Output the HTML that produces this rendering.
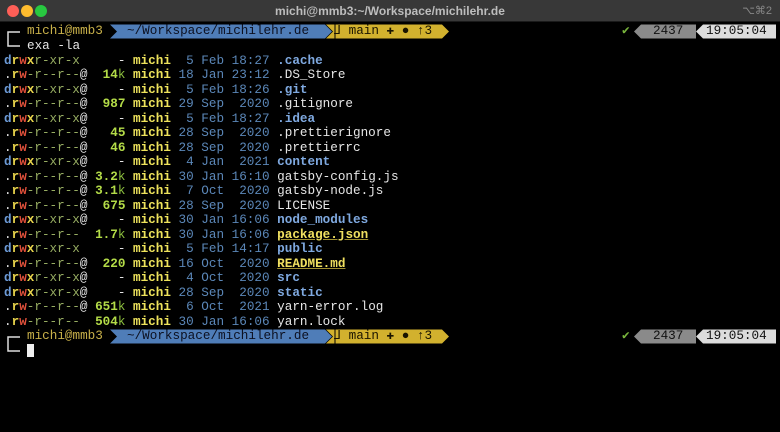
<!DOCTYPE html>
<html><head><meta charset="utf-8"><style>
*{margin:0;padding:0;box-sizing:border-box}
body{width:780px;height:432px;background:#000;overflow:hidden;position:relative;font-family:"Liberation Mono",monospace}
.tb{position:absolute;left:0;top:0;width:780px;height:22px;background:#383838;border-bottom:1px solid #1a1a1a}
.dot{position:absolute;top:5px;width:12px;height:12px;border-radius:50%}
.tt{position:absolute;left:0;width:780px;top:4px;text-align:center;font:bold 12px "Liberation Sans",sans-serif;color:#bdbdbd}
.kb{position:absolute;right:8px;top:4px;font:11px "Liberation Sans",sans-serif;color:#888}
.l{position:absolute;left:4px;font-size:12.65px;line-height:14.5px;white-space:pre;color:#e6e6e6}
.D{color:#6c9ad6;font-weight:bold}.R{color:#e8d44c;font-weight:bold}.W{color:#e0503a;font-weight:bold}.X{color:#e8d44c;font-weight:bold}
.g{color:#97ad62}.S{color:#b4dc48;font-weight:bold}.k{color:#8cbf3e}.u{color:#eee35c;font-weight:bold}.dt{color:#5b87b8}
.B{color:#7fa9e0;font-weight:bold}.Y{color:#f0e060;font-weight:bold;text-decoration:underline;text-decoration-color:#a09030}
.ps{position:absolute;left:0}
</style></head><body>
<div class="tb"><div class="dot" style="left:7px;background:#fe5f57"></div><div class="dot" style="left:21px;background:#febc2e"></div><div class="dot" style="left:35px;background:#28c840"></div>
<div class="tt">michi@mmb3:~/Workspace/michilehr.de</div><div class="kb">⌥⌘2</div></div>

<svg class="ps" style="top:24px" width="780" height="34">
<path d="M20 8 H8 V22 H20" stroke="#ddd" stroke-width="1.5" fill="none"/>
<polygon points="110,0.5 325,0.5 332,7.5 325,14.5 110,14.5 117,7.5" fill="#4f7db8"/>
<polygon points="326,0.5 442,0.5 449,7.5 442,14.5 326,14.5 333,7.5" fill="#d2b12e"/>
<polygon points="634,7.5 641,0.5 696,0.5 696,14.5 641,14.5" fill="#8a8a8a"/>
<polygon points="696,7.5 703,0.5 776,0.5 776,14.5 703,14.5" fill="#dcdcdc"/>
<line x1="335" y1="0.5" x2="335" y2="14.5" stroke="#000" stroke-width="1"/>
</svg>
<div class="l" style="top:24px;left:27px;color:#c9b14a">michi@mmb3</div>
<div class="l" style="top:24px;left:127px;color:#0c1020">~/Workspace/michilehr.de</div>
<div class="l" style="top:24px;left:334px;color:#1a1400">⅃ main ✚ ● ↑3</div>
<div class="l" style="top:24px;left:622px;color:#78b43c">✔</div>
<div class="l" style="top:24px;left:653px;color:#111">2437</div>
<div class="l" style="top:24px;left:706px;color:#111">19:05:04</div>
<div class="l" style="top:38.5px;left:27px">exa -la</div>

<div class="l" style="top:53.5px"><span class="D">d</span><span class="R">r</span><span class="W">w</span><span class="X">x</span><span class="g">r-xr-x</span>     - <span class="u">michi</span> <span class="dt"> 5 Feb 18:27</span> <span class="B">.cache</span></div>
<div class="l" style="top:68px">.<span class="R">r</span><span class="W">w</span><span class="g">-r--r--</span>@  <span class="S">14</span><span class="k">k</span> <span class="u">michi</span> <span class="dt">18 Jan 23:12</span> .DS_Store</div>
<div class="l" style="top:82.5px"><span class="D">d</span><span class="R">r</span><span class="W">w</span><span class="X">x</span><span class="g">r-xr-x</span>@    - <span class="u">michi</span> <span class="dt"> 5 Feb 18:26</span> <span class="B">.git</span></div>
<div class="l" style="top:97px">.<span class="R">r</span><span class="W">w</span><span class="g">-r--r--</span>@  <span class="S">987</span> <span class="u">michi</span> <span class="dt">29 Sep  2020</span> .gitignore</div>
<div class="l" style="top:111.5px"><span class="D">d</span><span class="R">r</span><span class="W">w</span><span class="X">x</span><span class="g">r-xr-x</span>@    - <span class="u">michi</span> <span class="dt"> 5 Feb 18:27</span> <span class="B">.idea</span></div>
<div class="l" style="top:126px">.<span class="R">r</span><span class="W">w</span><span class="g">-r--r--</span>@   <span class="S">45</span> <span class="u">michi</span> <span class="dt">28 Sep  2020</span> .prettierignore</div>
<div class="l" style="top:140.5px">.<span class="R">r</span><span class="W">w</span><span class="g">-r--r--</span>@   <span class="S">46</span> <span class="u">michi</span> <span class="dt">28 Sep  2020</span> .prettierrc</div>
<div class="l" style="top:155px"><span class="D">d</span><span class="R">r</span><span class="W">w</span><span class="X">x</span><span class="g">r-xr-x</span>@    - <span class="u">michi</span> <span class="dt"> 4 Jan  2021</span> <span class="B">content</span></div>
<div class="l" style="top:169.5px">.<span class="R">r</span><span class="W">w</span><span class="g">-r--r--</span>@ <span class="S">3.2</span><span class="k">k</span> <span class="u">michi</span> <span class="dt">30 Jan 16:10</span> gatsby-config.js</div>
<div class="l" style="top:184px">.<span class="R">r</span><span class="W">w</span><span class="g">-r--r--</span>@ <span class="S">3.1</span><span class="k">k</span> <span class="u">michi</span> <span class="dt"> 7 Oct  2020</span> gatsby-node.js</div>
<div class="l" style="top:198.5px">.<span class="R">r</span><span class="W">w</span><span class="g">-r--r--</span>@  <span class="S">675</span> <span class="u">michi</span> <span class="dt">28 Sep  2020</span> LICENSE</div>
<div class="l" style="top:213px"><span class="D">d</span><span class="R">r</span><span class="W">w</span><span class="X">x</span><span class="g">r-xr-x</span>@    - <span class="u">michi</span> <span class="dt">30 Jan 16:06</span> <span class="B">node_modules</span></div>
<div class="l" style="top:227.5px">.<span class="R">r</span><span class="W">w</span><span class="g">-r--r--</span>  <span class="S">1.7</span><span class="k">k</span> <span class="u">michi</span> <span class="dt">30 Jan 16:06</span> <span class="Y">package.json</span></div>
<div class="l" style="top:242px"><span class="D">d</span><span class="R">r</span><span class="W">w</span><span class="X">x</span><span class="g">r-xr-x</span>     - <span class="u">michi</span> <span class="dt"> 5 Feb 14:17</span> <span class="B">public</span></div>
<div class="l" style="top:256.5px">.<span class="R">r</span><span class="W">w</span><span class="g">-r--r--</span>@  <span class="S">220</span> <span class="u">michi</span> <span class="dt">16 Oct  2020</span> <span class="Y">README.md</span></div>
<div class="l" style="top:271px"><span class="D">d</span><span class="R">r</span><span class="W">w</span><span class="X">x</span><span class="g">r-xr-x</span>@    - <span class="u">michi</span> <span class="dt"> 4 Oct  2020</span> <span class="B">src</span></div>
<div class="l" style="top:285.5px"><span class="D">d</span><span class="R">r</span><span class="W">w</span><span class="X">x</span><span class="g">r-xr-x</span>@    - <span class="u">michi</span> <span class="dt">28 Sep  2020</span> <span class="B">static</span></div>
<div class="l" style="top:300px">.<span class="R">r</span><span class="W">w</span><span class="g">-r--r--</span>@ <span class="S">651</span><span class="k">k</span> <span class="u">michi</span> <span class="dt"> 6 Oct  2021</span> yarn-error.log</div>
<div class="l" style="top:314.5px">.<span class="R">r</span><span class="W">w</span><span class="g">-r--r--</span>  <span class="S">504</span><span class="k">k</span> <span class="u">michi</span> <span class="dt">30 Jan 16:06</span> yarn.lock</div>

<svg class="ps" style="top:329px" width="780" height="34">
<path d="M20 8 H8 V22 H20" stroke="#ddd" stroke-width="1.5" fill="none"/>
<polygon points="110,0.5 325,0.5 332,7.5 325,14.5 110,14.5 117,7.5" fill="#4f7db8"/>
<polygon points="326,0.5 442,0.5 449,7.5 442,14.5 326,14.5 333,7.5" fill="#d2b12e"/>
<polygon points="634,7.5 641,0.5 696,0.5 696,14.5 641,14.5" fill="#8a8a8a"/>
<polygon points="696,7.5 703,0.5 776,0.5 776,14.5 703,14.5" fill="#dcdcdc"/>
<line x1="335" y1="0.5" x2="335" y2="14.5" stroke="#000" stroke-width="1"/>
<rect x="27" y="15" width="7" height="13" fill="#eee"/>
</svg>
<div class="l" style="top:329px;left:27px;color:#c9b14a">michi@mmb3</div>
<div class="l" style="top:329px;left:127px;color:#0c1020">~/Workspace/michilehr.de</div>
<div class="l" style="top:329px;left:334px;color:#1a1400">⅃ main ✚ ● ↑3</div>
<div class="l" style="top:329px;left:622px;color:#78b43c">✔</div>
<div class="l" style="top:329px;left:653px;color:#111">2437</div>
<div class="l" style="top:329px;left:706px;color:#111">19:05:04</div>
</body></html>
